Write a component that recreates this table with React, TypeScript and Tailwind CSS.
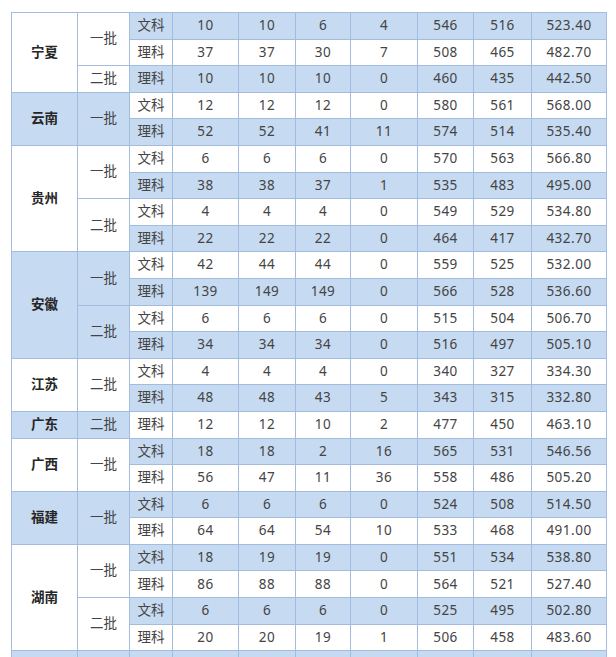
import React from 'react';

type Row = [string, string, string, string, string, string, string, string];

type Batch = { name: string; rows: Row[] };

type Group = { province: string; batches: Batch[] };

const groups: Group[] = [
  {
    province: '宁夏',
    batches: [
      {
        name: '一批',
        rows: [
          ['文科', '10', '10', '6', '4', '546', '516', '523.40'],
          ['理科', '37', '37', '30', '7', '508', '465', '482.70'],
        ],
      },
      { name: '二批', rows: [['理科', '10', '10', '10', '0', '460', '435', '442.50']] },
    ],
  },
  {
    province: '云南',
    batches: [
      {
        name: '一批',
        rows: [
          ['文科', '12', '12', '12', '0', '580', '561', '568.00'],
          ['理科', '52', '52', '41', '11', '574', '514', '535.40'],
        ],
      },
    ],
  },
  {
    province: '贵州',
    batches: [
      {
        name: '一批',
        rows: [
          ['文科', '6', '6', '6', '0', '570', '563', '566.80'],
          ['理科', '38', '38', '37', '1', '535', '483', '495.00'],
        ],
      },
      {
        name: '二批',
        rows: [
          ['文科', '4', '4', '4', '0', '549', '529', '534.80'],
          ['理科', '22', '22', '22', '0', '464', '417', '432.70'],
        ],
      },
    ],
  },
  {
    province: '安徽',
    batches: [
      {
        name: '一批',
        rows: [
          ['文科', '42', '44', '44', '0', '559', '525', '532.00'],
          ['理科', '139', '149', '149', '0', '566', '528', '536.60'],
        ],
      },
      {
        name: '二批',
        rows: [
          ['文科', '6', '6', '6', '0', '515', '504', '506.70'],
          ['理科', '34', '34', '34', '0', '516', '497', '505.10'],
        ],
      },
    ],
  },
  {
    province: '江苏',
    batches: [
      {
        name: '二批',
        rows: [
          ['文科', '4', '4', '4', '0', '340', '327', '334.30'],
          ['理科', '48', '48', '43', '5', '343', '315', '332.80'],
        ],
      },
    ],
  },
  {
    province: '广东',
    batches: [{ name: '二批', rows: [['理科', '12', '12', '10', '2', '477', '450', '463.10']] }],
  },
  {
    province: '广西',
    batches: [
      {
        name: '一批',
        rows: [
          ['文科', '18', '18', '2', '16', '565', '531', '546.56'],
          ['理科', '56', '47', '11', '36', '558', '486', '505.20'],
        ],
      },
    ],
  },
  {
    province: '福建',
    batches: [
      {
        name: '一批',
        rows: [
          ['文科', '6', '6', '6', '0', '524', '508', '514.50'],
          ['理科', '64', '64', '54', '10', '533', '468', '491.00'],
        ],
      },
    ],
  },
  {
    province: '湖南',
    batches: [
      {
        name: '一批',
        rows: [
          ['文科', '18', '19', '19', '0', '551', '534', '538.80'],
          ['理科', '86', '88', '88', '0', '564', '521', '527.40'],
        ],
      },
      {
        name: '二批',
        rows: [
          ['文科', '6', '6', '6', '0', '525', '495', '502.80'],
          ['理科', '20', '20', '19', '1', '506', '458', '483.60'],
        ],
      },
    ],
  },
];

const widths = [66, 52, 43, 66, 57, 55, 67, 56, 58, 75];

const cell = 'h-[26.6px] p-0 border border-[#a3bbdd] text-center align-middle';
const blue = 'bg-[#c6daf1]';

export default function App() {
  let rowIndex = 0;
  const body: React.ReactNode[] = [];

  groups.forEach((g, gi) => {
    const gShade = gi % 2 === 1 ? blue : 'bg-white';
    const total = g.batches.reduce((n, b) => n + b.rows.length, 0);
    g.batches.forEach((b, bi) => {
      b.rows.forEach((r, ri) => {
        const shade = rowIndex % 2 === 0 ? blue : 'bg-white';
        rowIndex++;
        body.push(
          <tr key={`${g.province}-${bi}-${ri}`}>
            {bi === 0 && ri === 0 && (
              <td rowSpan={total} className={`${cell} ${gShade} font-bold text-[#262626]`}>
                {g.province}
              </td>
            )}
            {ri === 0 && (
              <td rowSpan={b.rows.length} className={`${cell} ${gShade}`}>
                {b.name}
              </td>
            )}
            {r.map((v, i) => (
              <td key={i} className={`${cell} ${shade} ${i > 0 ? 'tracking-[0.5px]' : ''}`}>
                {v}
              </td>
            ))}
          </tr>
        );
      });
    });
  });

  body.push(
    <tr key="tail">
      {widths.map((_, i) => (
        <td key={i} className={`${cell} ${blue}`} />
      ))}
    </tr>
  );

  return (
    <div className="h-[657px] w-[616px] overflow-hidden bg-white pl-[11px] pt-[12px]">
      <table
        className="table-fixed border-collapse text-[13.5px] leading-none text-[#444]"
        style={{ width: widths.reduce((a, b) => a + b, 0) }}
      >
        <colgroup>
          {widths.map((w, i) => (
            <col key={i} style={{ width: w }} />
          ))}
        </colgroup>
        <tbody className="font-['Noto_Sans','Noto_Sans_CJK_SC',sans-serif]">{body}</tbody>
      </table>
    </div>
  );
}
